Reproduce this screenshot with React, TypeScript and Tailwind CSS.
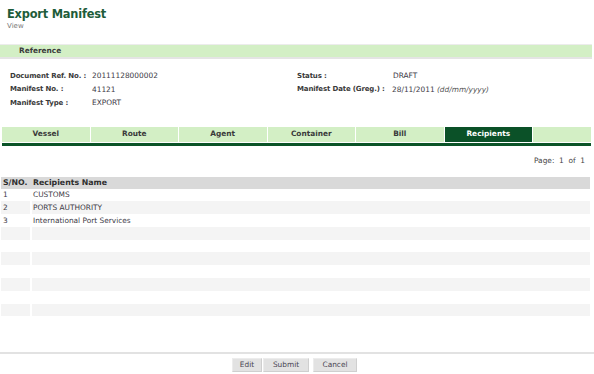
const tabs = ['Vessel', 'Route', 'Agent', 'Container', 'Bill', 'Recipients'];

const recipients = ['CUSTOMS', 'PORTS AUTHORITY', 'International Port Services'];

function InfoRow({ label, children, labelWidth }: { label: string; children: React.ReactNode; labelWidth: string }) {
  return (
    <div className="flex h-[13.5px] items-center whitespace-nowrap">
      <span className={`${labelWidth} shrink-0 text-[7px] font-bold tracking-[-0.15px] text-[#3a3a3a]`}>{label}</span>
      <span className="text-[#3d3a46]">{children}</span>
    </div>
  );
}

export default function App() {
  const rows = Array.from({ length: 10 }, (_, i) => recipients[i] ?? '');

  return (
    <div className="flex h-[374px] w-[594px] flex-col bg-white font-['DejaVu_Sans',sans-serif] text-[7.4px] text-[#333]">
      {/* page title */}
      <div className="pl-[7px] pt-[8px]">
        <h1 className="text-[11.4px] font-bold leading-[13px] tracking-[-0.2px] text-[#1e5c3a]">Export Manifest</h1>
        <p className="mt-[1px] text-[7px] leading-[8px] text-[#777]">View</p>
      </div>

      {/* reference section */}
      <div className="mt-[14px] h-[15px] w-[592px] border-t border-b-2 border-t-[#ececec] border-b-[#e4e4e4] bg-[#d3efc5] pl-[19px] font-bold leading-[12px] text-[#3a3a3a]">
        Reference
      </div>

      <div className="mt-[10px] flex">
        <div className="w-[297px] pl-[10px]">
          <InfoRow label="Document Ref. No. :" labelWidth="w-[82px]">20111128000002</InfoRow>
          <InfoRow label="Manifest No. :" labelWidth="w-[82px]">41121</InfoRow>
          <InfoRow label="Manifest Type :" labelWidth="w-[82px]">EXPORT</InfoRow>
        </div>
        <div>
          <InfoRow label="Status :" labelWidth="w-[96px]">DRAFT</InfoRow>
          <InfoRow label="Manifest Date (Greg.) :" labelWidth="w-[95px]">
            28/11/2011 <i className="text-[#555]">(dd/mm/yyyy)</i>
          </InfoRow>
        </div>
      </div>

      {/* tabs */}
      <div className="ml-[2px] mt-[17px] w-[589px]">
        <div className="flex h-[15px] gap-px">
          {tabs.map(tab => (
            <div
              key={tab}
              className={`flex w-[87.5px] items-center justify-center font-bold ${
                tab === 'Recipients' ? 'bg-[#0b5128] text-white' : 'bg-[#d3efc5] text-[#3a3a3a]'
              }`}
            >
              {tab}
            </div>
          ))}
          <div className="flex-1 bg-[#d3efc5]" />
        </div>
        <div className="mt-px h-[3px] bg-[#0b5428]" />
      </div>

      <div className="mt-[10px] flex w-[585px] justify-end leading-[10px] text-[#444]">Page:&nbsp; 1&nbsp; of&nbsp; 1</div>

      {/* recipients table */}
      <div className="ml-px mt-[11px] w-[589px]">
        <div className="flex h-[12px] items-center bg-[#d9d9d9] text-[7.8px] font-bold text-[#2e2e2e]">
          <span className="w-[31px] pl-[2px]">S/NO.</span>
          <span className="pl-[1px]">Recipients Name</span>
        </div>
        {rows.map((name, i) => (
          <div key={i} className={`flex h-[12.8px] items-center text-[#3d3a46] ${i % 2 === 1 ? 'bg-[#f4f4f4]' : 'bg-white'}`}>
            <span className="flex h-full w-[31px] items-center border-r-2 border-white pl-[2px]">{name ? i + 1 : ''}</span>
            <span className="pl-[1px]">{name}</span>
          </div>
        ))}
      </div>

      {/* actions */}
      <div className="mt-auto border-t-2 border-[#e2e2e2] pb-[2px] pt-[4px]">
        <div className="flex justify-center pr-[5px] text-[#4a4552]">
          <button className="h-[14px] w-[30px] border border-[#ececec] border-b-[#cfcfcf] border-r-[#cfcfcf] bg-[#e2e2e2] leading-[12px]">Edit</button>
          <button className="ml-px h-[14px] w-[46px] border border-[#ececec] border-b-[#cfcfcf] border-r-[#cfcfcf] bg-[#e2e2e2] leading-[12px]">Submit</button>
          <button className="ml-[4px] h-[14px] w-[44px] border border-[#ececec] border-b-[#cfcfcf] border-r-[#cfcfcf] bg-[#e2e2e2] leading-[12px]">Cancel</button>
        </div>
      </div>
    </div>
  );
}
